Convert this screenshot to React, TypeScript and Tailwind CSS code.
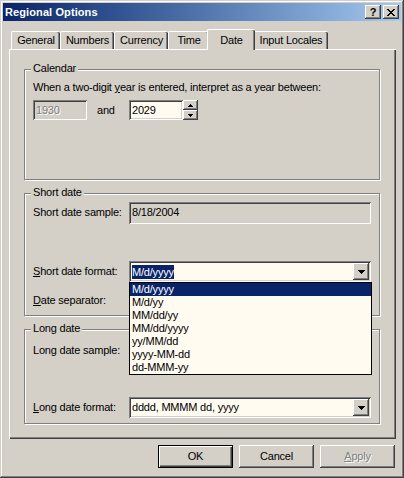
import React from "react";

const raised =
  "shadow-[inset_-1px_-1px_#404040,inset_1px_1px_#ffffff,inset_-2px_-2px_#808080,inset_2px_2px_#d4d0c8]";
const sunken =
  "shadow-[inset_1px_1px_#808080,inset_-1px_-1px_#ffffff,inset_2px_2px_#404040,inset_-2px_-2px_#d4d0c8]";

function DownArrow() {
  return (
    <svg width="7" height="4" viewBox="0 0 7 4" shapeRendering="crispEdges">
      <path d="M0 0h7v1h-1v1h-1v1h-1v1h-1v-1h-1v-1h-1v-1h-1z" fill="#000" />
    </svg>
  );
}

function SmallUp() {
  return (
    <svg width="5" height="3" viewBox="0 0 5 3" shapeRendering="crispEdges">
      <path d="M2 0h1v1h1v1h1v1h-5v-1h1v-1h1z" fill="#000" />
    </svg>
  );
}

function SmallDown() {
  return (
    <svg width="5" height="3" viewBox="0 0 5 3" shapeRendering="crispEdges">
      <path d="M0 0h5v1h-1v1h-1v1h-1v-1h-1v-1h-1z" fill="#000" />
    </svg>
  );
}

function CloseGlyph() {
  return (
    <svg width="8" height="7" viewBox="0 0 8 7" shapeRendering="crispEdges">
      <path
        d="M0 0h2v1h1v1h2v-1h1v-1h2v1h-1v1h-1v1h-1v1h1v1h1v1h1v1h-2v-1h-1v-1h-2v1h-1v1h-2v-1h1v-1h1v-1h1v-1h-1v-1h-1v-1h-1z"
        fill="#000"
      />
    </svg>
  );
}

function Tab({
  label,
  w,
  selected,
}: {
  label: string;
  w: string;
  selected?: boolean;
}) {
  if (selected) {
    return (
      <div
        className={`${w} h-[21px] -mx-[2px] -mb-[1px] relative z-10 bg-[#d4d0c8] border-t border-l border-white rounded-t-[2px] shadow-[inset_-1px_0_#404040,inset_-2px_0_#808080] flex items-center justify-center text-[11px] leading-[13px]`}
      >
        {label}
      </div>
    );
  }
  return (
    <div
      className={`${w} h-[18px] border-t border-l border-white rounded-t-[2px] shadow-[inset_-1px_0_#404040,inset_-2px_0_#808080] flex items-center justify-center text-[11px] leading-[13px]`}
    >
      {label}
    </div>
  );
}

function Group({
  title,
  h,
  extra,
  children,
}: {
  title: string;
  h: string;
  extra?: string;
  children: React.ReactNode;
}) {
  return (
    <div
      className={`relative w-[356px] ${h} ${extra ?? ""} border border-[#808080] shadow-[inset_1px_1px_#ffffff,1px_1px_#ffffff] flex flex-col pl-[8px]`}
    >
      <div className="absolute -top-[8px] left-[6px] px-[2px] bg-[#d4d0c8] text-[11px] leading-[13px]">
        {title}
      </div>
      {children}
    </div>
  );
}

function Combo({
  children,
  w,
}: {
  children?: React.ReactNode;
  w: string;
}) {
  return (
    <div
      className={`relative ${w} h-[21px] ${sunken} bg-[#fffbf0] flex items-center pl-[3px]`}
    >
      <div className="flex-1 flex items-center">{children}</div>
      <div
        className={`w-[16px] h-[17px] mr-[2px] ${raised} bg-[#d4d0c8] flex items-center justify-center`}
      >
        <DownArrow />
      </div>
    </div>
  );
}

function Button({
  children,
  isDefault,
  disabled,
}: {
  children: React.ReactNode;
  isDefault?: boolean;
  disabled?: boolean;
}) {
  if (isDefault) {
    return (
      <div className="w-[75px] h-[23px] border border-black shadow-[inset_1px_1px_#ffffff,inset_-1px_-1px_#404040,inset_-2px_-2px_#808080] flex items-center justify-center text-[11px] leading-[13px]">
        {children}
      </div>
    );
  }
  return (
    <div
      className={`w-[75px] h-[23px] ${raised} flex items-center justify-center text-[11px] leading-[13px] ${
        disabled ? "text-[#808080] [text-shadow:1px_1px_0_#ffffff]" : ""
      }`}
    >
      {children}
    </div>
  );
}

const formats = [
  "M/d/yyyy",
  "M/d/yy",
  "MM/dd/yy",
  "MM/dd/yyyy",
  "yy/MM/dd",
  "yyyy-MM-dd",
  "dd-MMM-yy",
];

export default function App() {
  return (
    <div className="w-[404px] h-[478px] bg-[#d4d0c8] p-[3px] flex flex-col text-black font-['Liberation_Sans',Arial,sans-serif] shadow-[inset_-1px_-1px_#404040,inset_1px_1px_#d4d0c8,inset_-2px_-2px_#808080,inset_2px_2px_#ffffff] select-none">
      {/* Title bar */}
      <div className="h-[18px] flex items-center bg-linear-to-r from-[#0a246a] to-[#a6caf0] pl-[2px] pr-[2px]">
        <span className="flex-1 text-white font-bold text-[11px] leading-[13px] tracking-[0.1px]">
          Regional Options
        </span>
        <div className="flex gap-[2px]">
          <div
            className={`w-[16px] h-[14px] ${raised} bg-[#d4d0c8] flex items-center justify-center text-[11px] font-bold leading-[11px]`}
          >
            ?
          </div>
          <div
            className={`w-[16px] h-[14px] ${raised} bg-[#d4d0c8] flex items-center justify-center`}
          >
            <CloseGlyph />
          </div>
        </div>
      </div>

      {/* Content */}
      <div className="flex flex-col px-[6px] pt-[8px] tracking-[-0.2px]">
        {/* Tabs */}
        <div className="h-[20px] flex items-end pl-[2px]">
          <Tab label="General" w="w-[49px]" />
          <Tab label="Numbers" w="w-[54px]" />
          <Tab label="Currency" w="w-[54px]" />
          <Tab label="Time" w="w-[41px]" />
          <Tab label="Date" w="w-[48px]" selected />
          <Tab label="Input Locales" w="w-[75px]" />
        </div>

        {/* Panel */}
        <div className="w-[387px] h-[390px] border-t border-l border-white shadow-[inset_-1px_-1px_#404040,inset_-2px_-2px_#808080] pl-[14px] pt-[19px] flex flex-col text-[11px] leading-[13px]">
          {/* Calendar */}
          <Group title="Calendar" h="h-[111px]">
            <div className="pt-[11px] leading-[13px]">
              When a two-digit <span className="underline">y</span>ear is
              entered, interpret as a year between:
            </div>
            <div className="mt-[6px] flex items-center h-[20px]">
              <div
                className={`w-[54px] h-[20px] ${sunken} bg-[#d4d0c8] text-[#808080] [text-shadow:1px_1px_0_#ffffff] pl-[3px] flex items-center`}
              >
                1930
              </div>
              <span className="ml-[10px] w-[32px]">and</span>
              <div
                className={`w-[54px] h-[20px] ${sunken} bg-[#fffbf0] pl-[3px] flex items-center`}
              >
                2029
              </div>
              <div className="w-[15px] h-[20px] flex flex-col">
                <div
                  className={`h-[10px] ${raised} bg-[#d4d0c8] flex items-center justify-center`}
                >
                  <SmallUp />
                </div>
                <div
                  className={`h-[10px] ${raised} bg-[#d4d0c8] flex items-center justify-center`}
                >
                  <SmallDown />
                </div>
              </div>
            </div>
          </Group>

          {/* Short date */}
          <Group title="Short date" h="h-[123px]" extra="mt-[13px]">
            <div className="pt-[8px] flex items-start">
              <div className="w-[96px] pt-[4px]">Short date sample:</div>
              <div
                className={`w-[242px] h-[22px] ${sunken} bg-[#d4d0c8] pl-[3px] pt-[4px]`}
              >
                8/18/2004
              </div>
            </div>
            <div className="mt-[37px] flex items-center h-[21px]">
              <div className="w-[96px]">
                <span className="underline">S</span>hort date format:
              </div>
              <div className="relative">
                <Combo w="w-[242px]">
                  <span className="bg-[#0a246a] text-white leading-[14px]">
                    M/d/yyyy
                  </span>
                </Combo>
                <div className="absolute top-full left-0 z-20 w-[243px] border border-black bg-[#fffbf0] flex flex-col">
                  {formats.map((f, i) => (
                    <div
                      key={f}
                      className={`h-[13px] leading-[13px] pl-[2px] ${
                        i === 0 ? "bg-[#0a246a] text-white" : ""
                      }`}
                    >
                      {f}
                    </div>
                  ))}
                </div>
              </div>
            </div>
            <div className="mt-[8px] flex items-center h-[21px]">
              <div className="w-[96px]">
                <span className="underline">D</span>ate separator:
              </div>
              <Combo w="w-[50px]" />
            </div>
          </Group>

          {/* Long date */}
          <Group title="Long date" h="h-[95px]" extra="mt-[13px]">
            <div className="pt-[10px] flex items-start">
              <div className="w-[96px] pt-[4px]">Long date sample:</div>
              <div
                className={`w-[242px] h-[22px] ${sunken} bg-[#d4d0c8]`}
              />
            </div>
            <div className="mt-[35px] flex items-center h-[21px]">
              <div className="w-[96px]">
                <span className="underline">L</span>ong date format:
              </div>
              <Combo w="w-[242px]">
                <span>dddd, MMMM dd, yyyy</span>
              </Combo>
            </div>
          </Group>
        </div>

        {/* Buttons */}
        <div className="mt-[6px] w-[387px] pr-[1px] flex justify-end gap-[6px]">
          <Button isDefault>OK</Button>
          <Button>Cancel</Button>
          <Button disabled>
            <span className="underline">A</span>pply
          </Button>
        </div>
      </div>
    </div>
  );
}
